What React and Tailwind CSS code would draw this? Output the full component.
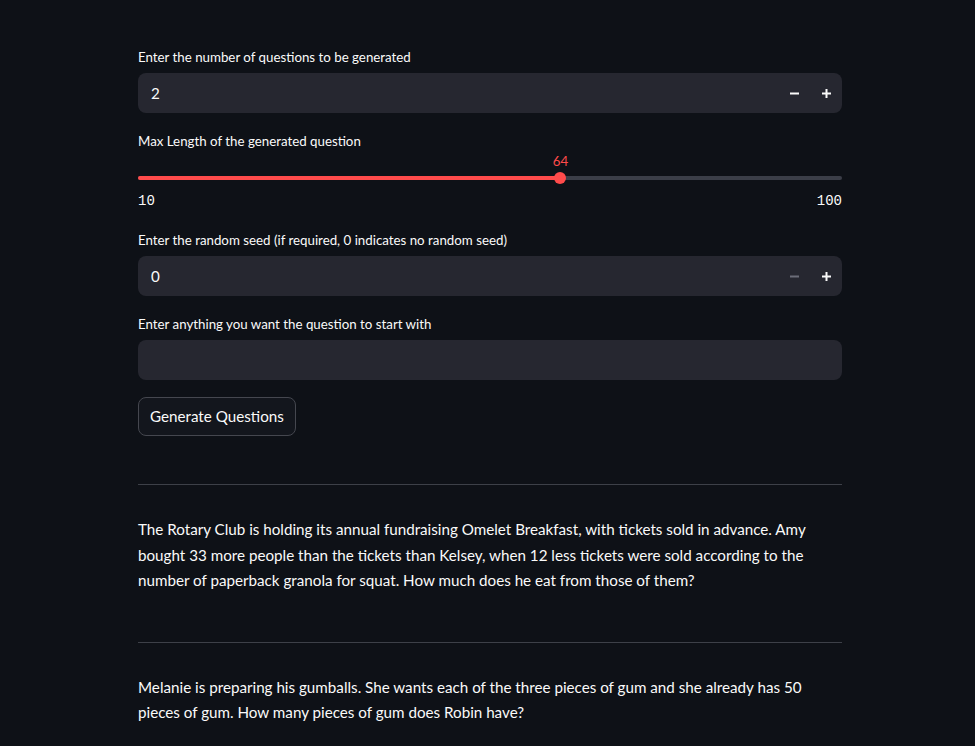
import React from 'react';

const SANS = { fontFamily: 'Lato, "Noto Sans", sans-serif' };

function Minus({ disabled }) {
  return (
    <svg width="9" height="9" viewBox="0 0 9 9">
      <rect x="0" y="3.5" width="9" height="2" fill={disabled ? '#6b6d78' : '#fafafa'} />
    </svg>
  );
}

function Plus() {
  return (
    <svg width="9" height="9" viewBox="0 0 9 9">
      <rect x="0" y="3.5" width="9" height="2" fill="#fafafa" />
      <rect x="3.5" y="0" width="2" height="9" fill="#fafafa" />
    </svg>
  );
}

function Label({ children }) {
  return <div className="h-[24px] flex items-center text-[13.3px] text-[#fafafa] mb-[3px]">{children}</div>;
}

function NumberInput({ label, value, minDisabled }) {
  return (
    <div>
      <Label>{label}</Label>
      <div className="h-10 bg-[#262730] rounded-lg flex items-center">
        <span className="flex-1 px-[13px] text-[15.2px] text-[#fafafa]">{value}</span>
        <button className="w-8 h-10 flex items-center justify-center"><Minus disabled={minDisabled} /></button>
        <button className="w-8 h-10 flex items-center justify-center"><Plus /></button>
      </div>
    </div>
  );
}

function Slider({ label, min, max, value }) {
  const pct = ((value - min) / (max - min)) * 100;
  return (
    <div>
      <div className="h-[24px] flex items-center text-[13.3px] text-[#fafafa]">{label}</div>
      <div className="relative h-[28px]">
        <div className="absolute top-[22px] left-0 right-0 h-1 rounded-full bg-[#3b3e48]" />
        <div className="absolute top-[22px] left-0 h-1 rounded-l-full bg-[#ff4b4b]" style={{ width: pct + '%' }} />
        <div className="absolute top-[18px] w-3 h-3 -ml-1.5 rounded-full bg-[#ff4b4b]" style={{ left: pct + '%' }} />
        <div className="absolute -top-[2px] -translate-x-1/2 text-[13.3px] text-[#ff4b4b] leading-[18px]" style={{ left: pct + '%' }}>{value}</div>
      </div>
      <div className="mt-[6px] flex justify-between h-[26px] items-center text-[14px] text-[#fafafa]" style={{ fontFamily: '"Liberation Mono", monospace' }}>
        <span>{min}</span>
        <span>{max}</span>
      </div>
    </div>
  );
}

const QUESTIONS = [
  'The Rotary Club is holding its annual fundraising Omelet Breakfast, with tickets sold in advance. Amy bought 33 more people than the tickets than Kelsey, when 12 less tickets were sold according to the number of paperback granola for squat. How much does he eat from those of them?',
  'Melanie is preparing his gumballs. She wants each of the three pieces of gum and she already has 50 pieces of gum. How many pieces of gum does Robin have?',
];

export default function App() {
  return (
    <div className="min-h-[746px] bg-[#0e1117] text-[#fafafa]" style={SANS}>
      <div className="w-[704px] ml-[138px] pt-[46px] flex flex-col">
        <NumberInput label="Enter the number of questions to be generated" value="2" />
        <div className="mt-[17px]">
          <Slider label="Max Length of the generated question" min={10} max={100} value={64} />
        </div>
        <div className="mt-[15px]">
          <NumberInput label="Enter the random seed (if required, 0 indicates no random seed)" value="0" minDisabled />
        </div>
        <div className="mt-[17px]">
          <Label>Enter anything you want the question to start with</Label>
          <div className="h-10 bg-[#262730] rounded-lg" />
        </div>
        <div className="mt-[17px]">
          <button className="h-[39px] px-[11px] rounded-lg border border-[#45474f] bg-[#13161d] text-[15.2px] text-[#fafafa]">
            Generate Questions
          </button>
        </div>
        {QUESTIONS.map((q, i) => (
          <div key={i}>
            <div className="mt-[48px] h-px bg-[#3d4048]" />
            <p className="mt-[32px] text-[15.2px] leading-[25.6px] text-[#fafafa]">{q}</p>
          </div>
        ))}
      </div>
    </div>
  );
}
